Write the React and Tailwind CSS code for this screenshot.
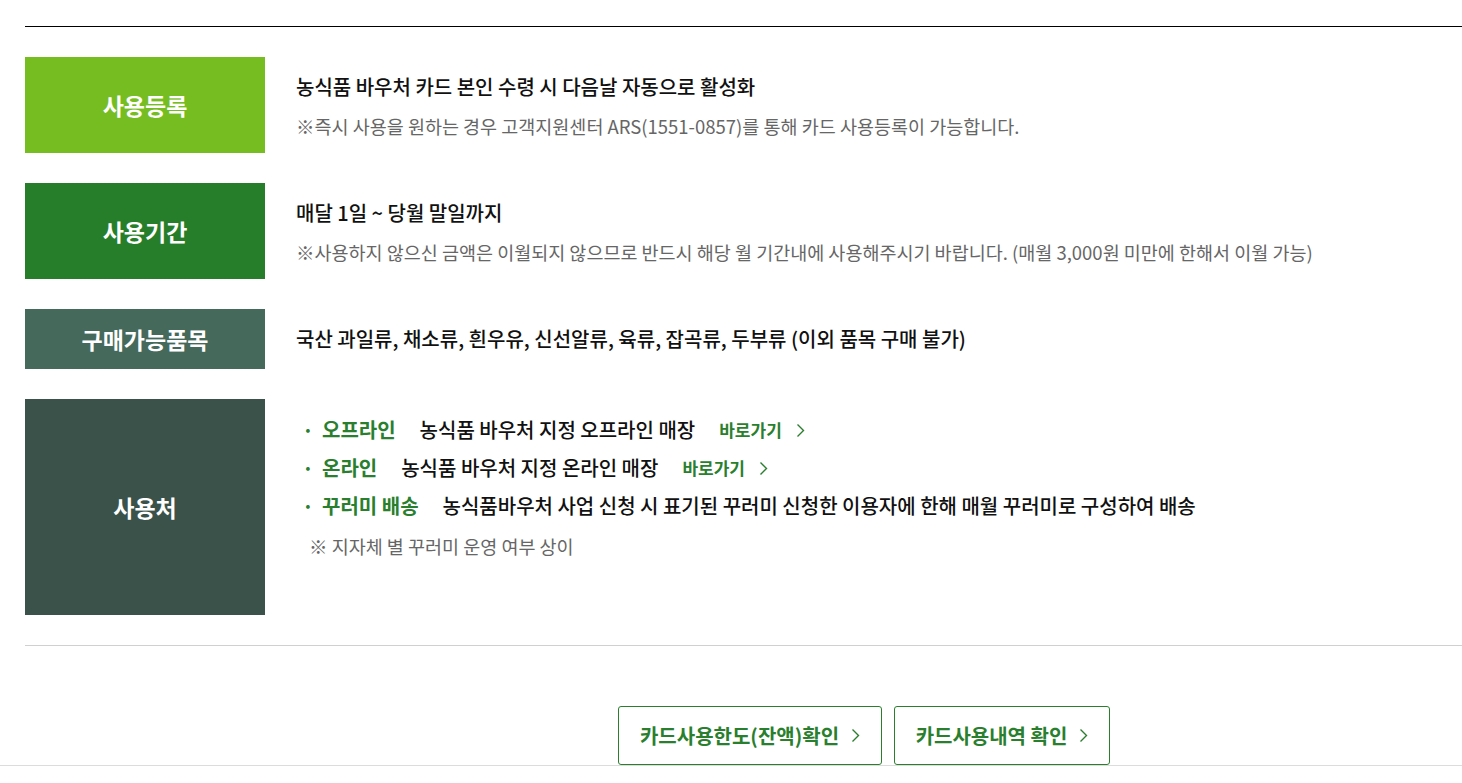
import React from 'react';

const font = { fontFamily: '"Noto Sans CJK KR", "Noto Sans", sans-serif' };

const Chevron = ({ className }) => (
    <svg className={className} width="9" height="15" viewBox="0 0 9 15" fill="none">
        <path d="M1.5 1.5L7.5 7.5L1.5 13.5" stroke="currentColor" strokeWidth="1.4" />
    </svg>
);

const Label = ({ color, children }) => (
    <div className={`w-[240px] shrink-0 flex items-center justify-center text-white text-[23px] font-bold ${color}`}>
        {children}
    </div>
);

const Shop = ({ name, desc, link }) => (
    <li className="flex items-center h-[38px]">
        <span className="text-[#2a7f2e] text-[20px] font-bold w-[20px]">·</span>
        <span className="text-[#2a7f2e] text-[20px] font-bold">{name}</span>
        <span className="ml-[24px] text-[20px] font-medium text-[#111]">{desc}</span>
        {link && (
            <a href="#" className="ml-[24px] flex items-center text-[#2a7f2e] text-[17px] font-bold">
                바로가기
                <Chevron className="ml-[14px] text-[#2a7f2e]" />
            </a>
        )}
    </li>
);

export default function App() {
    return (
        <div className="overflow-hidden bg-white min-h-screen" style={font}>
            <div className="w-[1678px] ml-[25px] pt-[26px]">
                <div className="border-t border-black pt-[30px] flex flex-col gap-[30px]">
                    {/* 사용등록 */}
                    <div className="flex h-[96px]">
                        <Label color="bg-[#76bd21]">사용등록</Label>
                        <div className="ml-[31px] flex flex-col justify-center pt-[3px]">
                            <p className="text-[20px] font-medium text-[#111] leading-[28px]">농식품 바우처 카드 본인 수령 시 다음날 자동으로 활성화</p>
                            <p className="mt-[11px] text-[18.5px] text-[#666] leading-[28px]">※즉시 사용을 원하는 경우 고객지원센터 ARS(1551-0857)를 통해 카드 사용등록이 가능합니다.</p>
                        </div>
                    </div>

                    {/* 사용기간 */}
                    <div className="flex h-[96px]">
                        <Label color="bg-[#277e2a]">사용기간</Label>
                        <div className="ml-[31px] flex flex-col justify-center pt-[3px]">
                            <p className="text-[20px] font-medium text-[#111] leading-[28px]">매달 1일 ~ 당월 말일까지</p>
                            <p className="mt-[11px] text-[18.5px] text-[#666] leading-[28px]">※사용하지 않으신 금액은 이월되지 않으므로 반드시 해당 월 기간내에 사용해주시기 바랍니다. (매월 3,000원 미만에 한해서 이월 가능)</p>
                        </div>
                    </div>

                    {/* 구매가능품목 */}
                    <div className="flex h-[60px]">
                        <Label color="bg-[#45695b]">구매가능품목</Label>
                        <div className="ml-[31px] flex items-center">
                            <p className="text-[20px] font-medium text-[#111]">국산 과일류, 채소류, 흰우유, 신선알류, 육류, 잡곡류, 두부류 (이외 품목 구매 불가)</p>
                        </div>
                    </div>

                    {/* 사용처 */}
                    <div className="flex h-[216px]">
                        <Label color="bg-[#3a524a]">사용처</Label>
                        <div className="ml-[37px] pt-[12px]">
                            <ul>
                                <Shop name="오프라인" desc="농식품 바우처 지정 오프라인 매장" link />
                                <Shop name="온라인" desc="농식품 바우처 지정 온라인 매장" link />
                                <Shop name="꾸러미 배송" desc="농식품바우처 사업 신청 시 표기된 꾸러미 신청한 이용자에 한해 매월 꾸러미로 구성하여 배송" />
                            </ul>
                            <p className="mt-[2px] ml-[7px] text-[18.5px] text-[#666] leading-[38px]">※ 지자체 별 꾸러미 운영 여부 상이</p>
                        </div>
                    </div>
                </div>

                <div className="mt-[30px] border-t border-[#d0d0d0] pt-[60px] flex justify-center gap-[12px]">
                    <a href="#" className="w-[264px] h-[59px] border border-[#2a7f2e] rounded-[3px] flex items-center justify-center text-[#2a7f2e] text-[20px] font-bold">
                        카드사용한도(잔액)확인
                        <Chevron className="ml-[12px]" />
                    </a>
                    <a href="#" className="w-[216px] h-[59px] border border-[#2a7f2e] rounded-[3px] flex items-center justify-center text-[#2a7f2e] text-[20px] font-bold">
                        카드사용내역 확인
                        <Chevron className="ml-[12px]" />
                    </a>
                </div>
            </div>
            <div className="border-t border-[#dcdcdc]" />
        </div>
    );
}
